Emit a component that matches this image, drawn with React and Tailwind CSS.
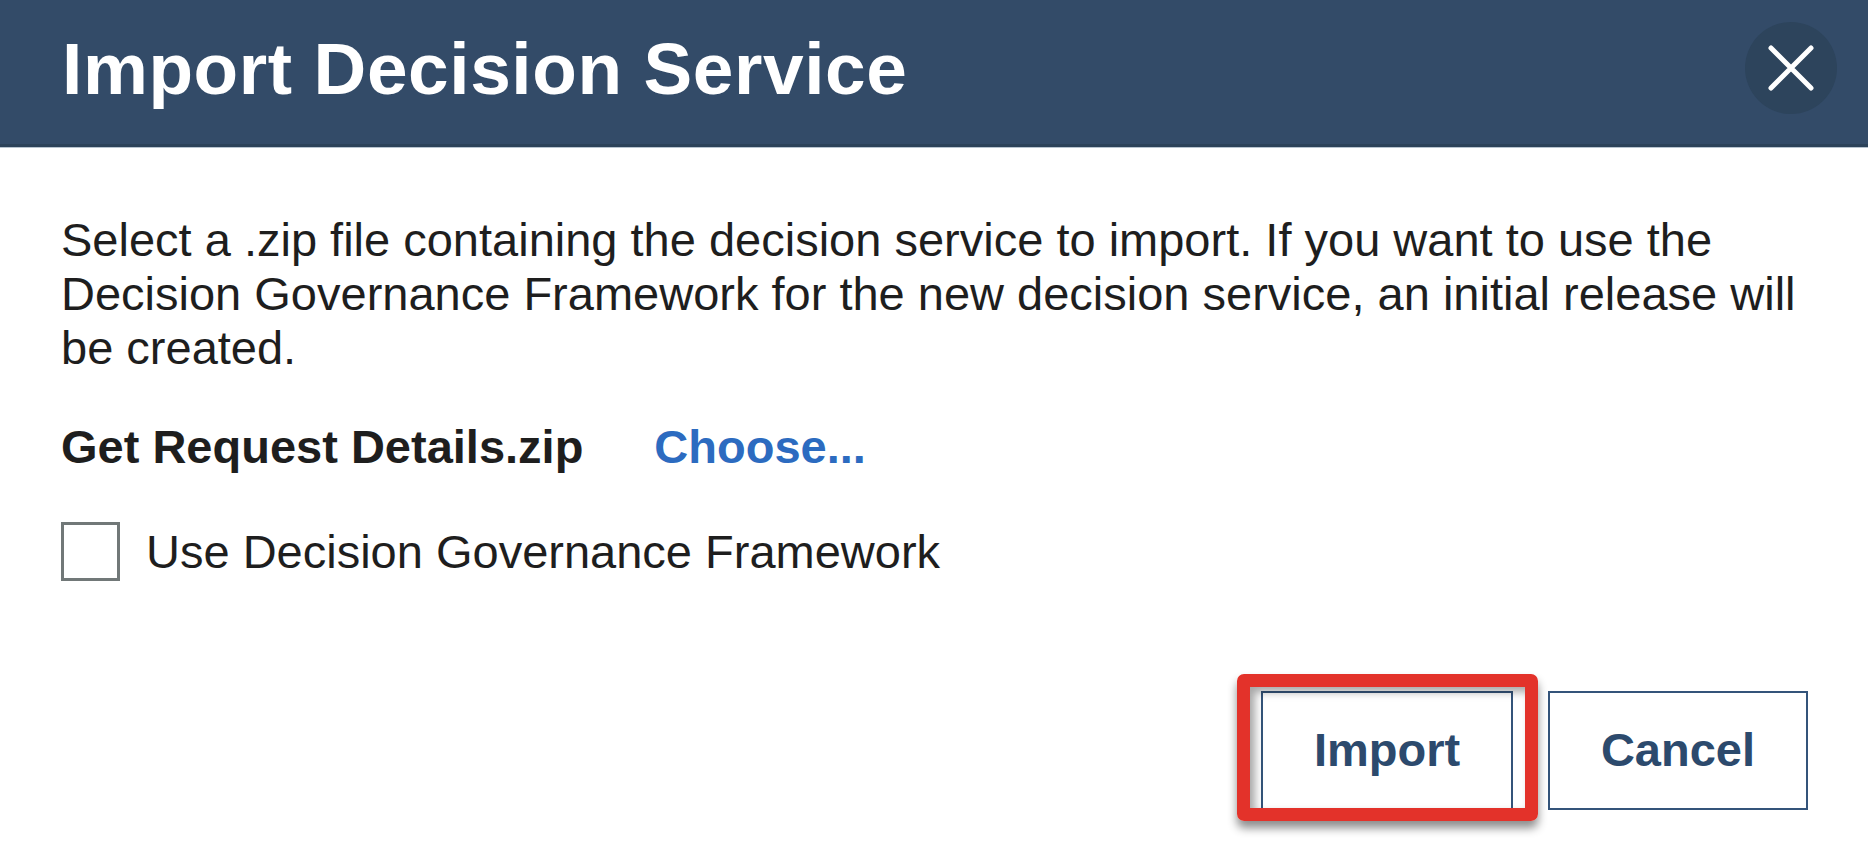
import React, { useState } from 'react';

const App = () => {
  const [useGovernance, setUseGovernance] = useState(false);

  return (
    <div
      className="min-h-screen bg-white text-[#1e1e1e]"
      style={{ fontFamily: '"Liberation Sans", Arial, Helvetica, sans-serif' }}
    >
      {/* Header */}
      <div className="h-[147px] bg-[#334b68] border-b-[3px] border-[#2c4259] shadow-[0_1px_0_#b7c3cf] flex items-start justify-between pl-[62px] pr-[31px]">
        <h1 className="pt-[32px] text-[73px] leading-none font-bold text-white tracking-[0.6px]">
          Import Decision Service
        </h1>
        <button className="mt-[22px] w-[92px] h-[92px] rounded-full bg-[#2d445c] flex items-center justify-center">
          <svg width="46" height="46" viewBox="0 0 46 46" fill="none">
            <path d="M3 3L43 43M43 3L3 43" stroke="white" strokeWidth="5" strokeLinecap="round" />
          </svg>
        </button>
      </div>

      {/* Body */}
      <div className="pl-[61px] pr-[60px] pt-[66px]">
        <p className="text-[47px] leading-[54px] max-w-[1760px]">
          Select a .zip file containing the decision service to import. If you want to use the Decision Governance Framework for the new decision service, an initial release will be created.
        </p>

        <div className="mt-[45px] flex items-center text-[47px] leading-[54px] font-bold">
          <span>Get Request Details.zip</span>
          <button className="ml-[71px] text-[#2c6bc0] font-bold">Choose...</button>
        </div>

        <label className="mt-[48px] flex items-center cursor-pointer">
          <span
            onClick={() => setUseGovernance(!useGovernance)}
            className="w-[59px] h-[59px] border-[3px] border-[#717878] bg-white flex items-center justify-center"
          >
            {useGovernance && (
              <svg width="36" height="36" viewBox="0 0 24 24" fill="none">
                <path d="M4 12l5 5L20 6" stroke="#334b68" strokeWidth="3" />
              </svg>
            )}
          </span>
          <span className="ml-[26px] text-[47px] leading-[54px]">Use Decision Governance Framework</span>
        </label>
      </div>

      {/* Footer buttons */}
      <div className="mt-[110px] flex justify-end gap-[35px] pr-[60px]">
        <div className="relative">
          <button className="w-[252px] h-[119px] border-2 border-[#34547a] bg-white text-[47px] font-bold text-[#2c4a6d]">
            Import
          </button>
          <div className="absolute left-[-24px] top-[-17px] right-[-25px] bottom-[-11px] border-[13px] border-[#e3322a] rounded-[7px] shadow-[0_7px_10px_rgba(0,0,0,0.45),inset_5px_5px_9px_rgba(0,0,0,0.35)] pointer-events-none" />
        </div>
        <button className="w-[260px] h-[119px] border-2 border-[#34547a] bg-white text-[47px] font-bold text-[#2c4a6d]">
          Cancel
        </button>
      </div>
    </div>
  );
};

export default App;
